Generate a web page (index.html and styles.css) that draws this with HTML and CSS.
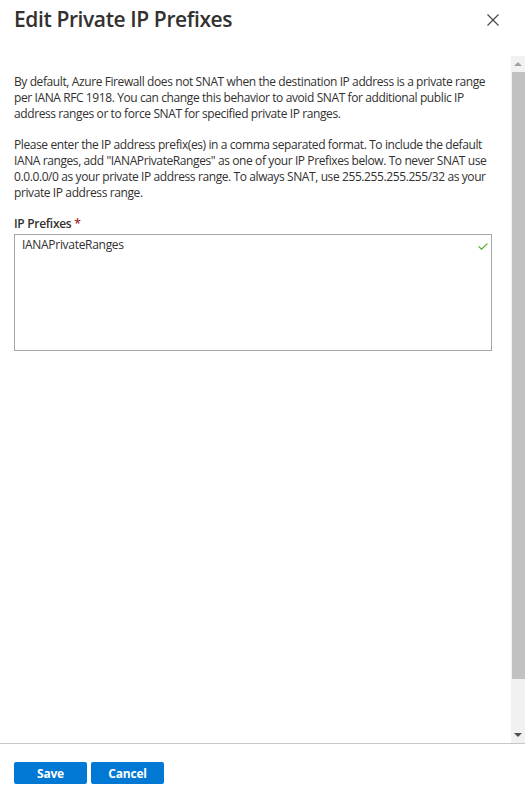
FILE: index.html
```html
<!DOCTYPE html>
<html lang="en">
<head>
<meta charset="utf-8">
<title>Edit Private IP Prefixes</title>
<link rel="stylesheet" href="styles.css">
</head>
<body>
<div class="blade">
  <header class="blade-header">
    <h1 class="blade-title">Edit Private IP Prefixes</h1>
    <button class="close-btn" aria-label="Close">
      <svg width="12" height="12" viewBox="0 0 12 12"><path d="M0.5 0.5 L11.5 11.5 M11.5 0.5 L0.5 11.5" stroke="#444" stroke-width="1.1" fill="none"/></svg>
    </button>
  </header>
  <div class="blade-body">
    <main class="blade-content">
      <p class="info">By default, Azure Firewall does not SNAT when the destination IP address is a private range per IANA RFC 1918. You can change this behavior to avoid SNAT for additional public IP address ranges or to force SNAT for specified private IP ranges.</p>
      <p class="info">Please enter the IP address prefix(es) in a comma separated format. To include the default IANA ranges, add "IANAPrivateRanges" as one of your IP Prefixes below. To never SNAT use 0.0.0.0/0 as your private IP address range. To always SNAT, use 255.255.255.255/32 as your private IP address range.</p>
      <label class="field-label">IP Prefixes <span class="req">*</span></label>
      <div class="textarea">
        <span class="textarea-value">IANAPrivateRanges</span>
        <svg class="valid" width="10" height="7" viewBox="0 0 10 7"><path d="M0.6 3.4 L3.5 6.2 L9.4 0.6" stroke="#4fae2e" stroke-width="1.2" fill="none"/></svg>
      </div>
    </main>
    <div class="scrollbar">
      <div class="sb-btn"><span class="arrow-up"></span></div>
      <div class="sb-thumb"></div>
      <div class="sb-track"></div>
      <div class="sb-btn"><span class="arrow-down"></span></div>
    </div>
  </div>
  <footer class="blade-footer">
    <button class="btn">Save</button>
    <button class="btn">Cancel</button>
  </footer>
</div>
</body>
</html>
```
FILE: styles.css
```css
html, body {
  margin: 0;
  padding: 0;
  background: #fff;
}
body {
  font-family: "Open Sans", "Noto Sans", sans-serif;
  color: #323130;
}
.blade {
  width: 525px;
  height: 800px;
  display: flex;
  flex-direction: column;
}
.blade-header {
  height: 56px;
  display: flex;
  align-items: flex-start;
  justify-content: space-between;
  padding: 0 26px 0 14px;
  box-sizing: border-box;
}
.blade-title {
  margin: 5px 0 0;
  font-size: 21px;
  font-weight: 600;
  color: #323130;
  letter-spacing: -0.4px;
}
.close-btn {
  margin-top: 14px;
  padding: 0;
  border: 0;
  background: none;
  width: 12px;
  height: 12px;
  display: flex;
}
.blade-body {
  height: 687px;
  display: flex;
  border-bottom: 1px solid #c8c8c8;
}
.blade-content {
  flex: 1;
  padding: 18px 14px 0 14px;
}
.info {
  margin: 0 0 16px;
  font-size: 12px;
  line-height: 16px;
  letter-spacing: -0.4px;
  color: #323130;
}
.info + .info {
  margin-top: -1px;
}
.field-label {
  display: block;
  font-size: 12px;
  font-weight: 600;
  line-height: 16px;
  letter-spacing: -0.3px;
  margin-top: -1px;
  margin-bottom: 2px;
}
.req {
  color: #a4262c;
}
.textarea {
  height: 117px;
  margin-right: 5px;
  border: 1px solid #a6a6a6;
  box-sizing: border-box;
  display: flex;
  justify-content: space-between;
  align-items: flex-start;
  padding: 2px 3px 0 7px;
}
.textarea-value {
  font-size: 12px;
  line-height: 16px;
  letter-spacing: -0.3px;
}
.valid {
  margin-top: 6px;
}
.scrollbar {
  width: 14px;
  background: #f1f1f1;
  display: flex;
  flex-direction: column;
}
.sb-btn {
  height: 16px;
  display: flex;
  align-items: center;
  justify-content: center;
}
.arrow-up {
  width: 0;
  height: 0;
  border-left: 4px solid transparent;
  border-right: 4px solid transparent;
  border-bottom: 4px solid #a3a3a3;
}
.arrow-down {
  width: 0;
  height: 0;
  border-left: 4px solid transparent;
  border-right: 4px solid transparent;
  border-top: 4px solid #505050;
}
.sb-thumb {
  height: 607px;
  background: #c1c1c1;
  margin-left: 1px;
}
.sb-track {
  flex: 1;
}
.blade-footer {
  display: flex;
  gap: 4px;
  padding: 18px 14px 0;
}
.btn {
  width: 73px;
  height: 22px;
  border: 0;
  border-radius: 2px;
  background: #0078d4;
  color: #fff;
  font-family: "Open Sans", "Noto Sans", sans-serif;
  font-size: 12px;
  font-weight: 700;
  letter-spacing: -0.2px;
  padding: 0;
}
```
